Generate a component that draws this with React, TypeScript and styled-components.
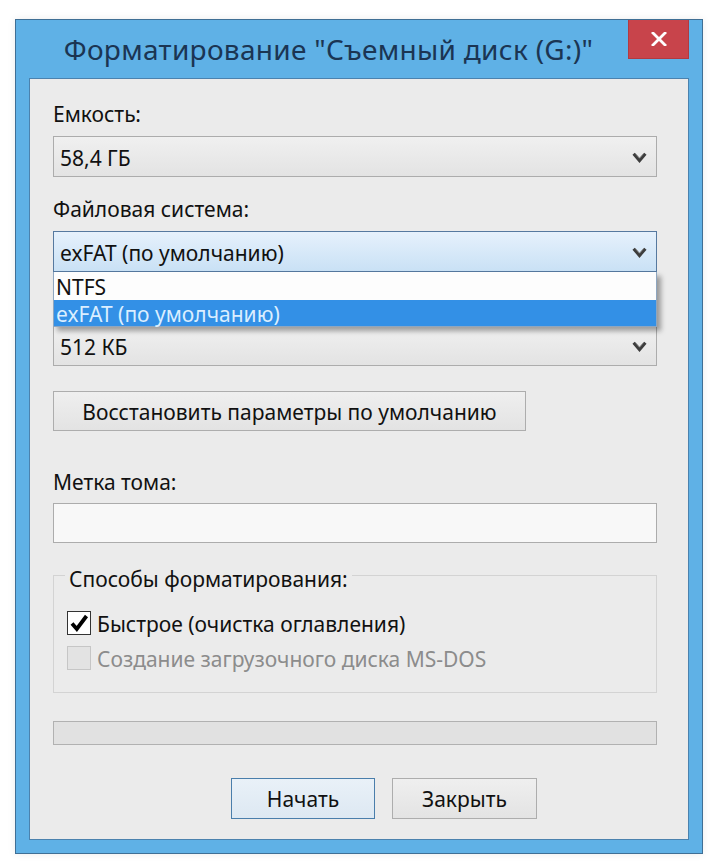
import React from "react";
import styled, { createGlobalStyle } from "styled-components";

const Global = createGlobalStyle`
  html, body { margin: 0; padding: 0; background: #ffffff; }
  body { font-family: "Segoe UI", "Noto Sans", "Open Sans", sans-serif; }
  * { box-sizing: border-box; }
`;

const FONT = `"Segoe UI", "Noto Sans", "Open Sans", sans-serif`;

const Page = styled.div`
  padding: 19px 0 0 15px;
  width: 724px;
  height: 868px;
`;

const Window = styled.div`
  width: 688px;
  border: 1px solid #3f6f95;
  background: #5fb1e6;
  padding: 0 13px 13px;
  display: flex;
  flex-direction: column;
  box-shadow: 0 0 8px rgba(0, 0, 0, 0.08);
`;

const TitleBar = styled.div`
  height: 58px;
  display: flex;
  align-items: flex-start;
`;

const Title = styled.div`
  flex: 1;
  text-align: center;
  font-family: ${FONT};
  font-size: 28px;
  letter-spacing: 0.3px;
  line-height: 58px;
  color: #1b3553;
  white-space: nowrap;
`;

const CloseButton = styled.div`
  width: 61px;
  height: 39px;
  background: #c8444b;
  border: 1px solid #b23a41;
  border-top: none;
  display: flex;
  align-items: center;
  justify-content: center;
`;

const Client = styled.div`
  background: #ebebeb;
  border: 1px solid #4b82ae;
  padding: 22px 31px 20px 23px;
  display: flex;
  flex-direction: column;
`;

const Label = styled.div<{ $mt?: number; $mb?: number }>`
  font-family: ${FONT};
  font-size: 21px;
  line-height: 26px;
  height: 26px;
  color: #111;
  margin-top: ${(p) => p.$mt ?? 0}px;
  margin-bottom: ${(p) => p.$mb ?? 9}px;
  white-space: nowrap;
`;

const ComboWrap = styled.div`
  position: relative;
`;

const Combo = styled.div<{ $focused?: boolean }>`
  height: 41px;
  border: 1px solid ${(p) => (p.$focused ? "#56799f" : "#acacac")};
  background: ${(p) =>
    p.$focused
      ? "linear-gradient(#e6f1fc, #c9e1f5)"
      : "linear-gradient(#f0f0f0, #e3e3e3)"};
  display: flex;
  align-items: center;
  padding: 2px 9px 0 6px;
  font-family: ${FONT};
  font-size: 21px;
  color: #111;
`;

const ComboText = styled.span`
  flex: 1;
  white-space: nowrap;
`;

const DropList = styled.div`
  position: absolute;
  top: 100%;
  left: 0;
  right: 0;
  z-index: 5;
  background: #fdfdfd;
  border: 1px solid #8ea6c0;
  border-top: none;
  box-shadow: 4px 4px 5px rgba(0, 0, 0, 0.35);
`;

const DropItem = styled.div<{ $selected?: boolean }>`
  height: ${(p) => (p.$selected ? 26 : 28)}px;
  line-height: ${(p) => (p.$selected ? 29 : 31)}px;
  padding-left: 2px;
  font-family: ${FONT};
  font-size: 21px;
  background: ${(p) => (p.$selected ? "#3390e6" : "transparent")};
  color: ${(p) => (p.$selected ? "#dbeeff" : "#111")};
  white-space: nowrap;
`;

const Gap = styled.div<{ $h: number }>`
  height: ${(p) => p.$h}px;
  flex: none;
`;

const Button = styled.div<{ $w: number; $default?: boolean }>`
  width: ${(p) => p.$w}px;
  height: ${(p) => (p.$default !== undefined ? 41 : 40)}px;
  border: 1px solid ${(p) => (p.$default ? "#4a7eab" : "#adadad")};
  background: ${(p) =>
    p.$default
      ? "linear-gradient(#e9f1f8, #dde8f2)"
      : "linear-gradient(#efefef, #e3e3e3)"};
  display: flex;
  align-items: center;
  justify-content: center;
  padding-top: 1px;
  font-family: ${FONT};
  font-size: 21px;
  color: #111;
  white-space: nowrap;
`;

const TextBox = styled.div`
  height: 40px;
  border: 1px solid #acacac;
  background: #f8f8f8;
`;

const Group = styled.fieldset`
  margin: 0;
  border: 1px solid #d3d3d3;
  padding: 13px 0 17px 13px;
  min-inline-size: 0;
`;

const Legend = styled.legend`
  margin-left: -2px;
  padding: 8px 4px 0;
  font-family: ${FONT};
  font-size: 21px;
  line-height: 26px;
  color: #111;
`;

const CheckRow = styled.div`
  height: 35px;
  display: flex;
  align-items: center;
  gap: 6px;
`;

const Box = styled.div<{ $disabled?: boolean }>`
  width: 24px;
  height: 24px;
  border: 1px solid ${(p) => (p.$disabled ? "#c6c6c6" : "#333")};
  background: ${(p) => (p.$disabled ? "#e3e3e3" : "#fff")};
  display: flex;
  align-items: center;
  justify-content: center;
`;

const CheckText = styled.span<{ $disabled?: boolean }>`
  font-family: ${FONT};
  font-size: 21px;
  line-height: 26px;
  padding-top: 2px;
  color: ${(p) => (p.$disabled ? "#8c8c8c" : "#111")};
  white-space: nowrap;
`;

const Progress = styled.div`
  height: 24px;
  border: 1px solid #b1b1b1;
  background: #e1e1e1;
`;

const ButtonRow = styled.div`
  display: flex;
  gap: 17px;
  padding-left: 178px;
`;

const Chevron = () => (
  <svg width="15" height="11" viewBox="0 0 15 11">
    <polyline
      points="1.6,1.8 7.5,8.6 13.4,1.8"
      fill="none"
      stroke="#3d3d3d"
      strokeWidth="3"
      strokeLinejoin="miter"
    />
    <polyline
      points="3.2,1.2 7.5,6.2 11.8,1.2"
      fill="none"
      stroke="#8a8a8a"
      strokeWidth="0.9"
    />
  </svg>
);

const CloseX = () => (
  <svg width="16" height="14" viewBox="0 0 16 14">
    <path d="M2 1 L14 13 M14 1 L2 13" stroke="#fff" strokeWidth="2.8" strokeLinecap="square" />
  </svg>
);

const Check = () => (
  <svg width="22" height="22" viewBox="0 0 22 22">
    <polyline
      points="4,11.5 8.8,17 18.5,4"
      fill="none"
      stroke="#000"
      strokeWidth="3.8"
      strokeLinejoin="miter"
    />
  </svg>
);

export default function App() {
  return (
    <>
      <Global />
      <Page>
        <Window>
          <TitleBar>
            <Title>Форматирование "Съемный диск (G:)"</Title>
            <CloseButton>
              <CloseX />
            </CloseButton>
          </TitleBar>
          <Client>
            <Label>Емкость:</Label>
            <Combo>
              <ComboText>58,4 ГБ</ComboText>
              <Chevron />
            </Combo>

            <Label $mt={19}>Файловая система:</Label>
            <ComboWrap>
              <Combo $focused>
                <ComboText>exFAT (по умолчанию)</ComboText>
                <Chevron />
              </Combo>
              <DropList>
                <DropItem>NTFS</DropItem>
                <DropItem $selected>exFAT (по умолчанию)</DropItem>
              </DropList>
            </ComboWrap>

            <Gap $h={53} />
            <Combo>
              <ComboText>512 КБ</ComboText>
              <Chevron />
            </Combo>

            <Gap $h={25} />
            <Button $w={473}>Восстановить параметры по умолчанию</Button>

            <Label $mt={38} $mb={8}>Метка тома:</Label>
            <TextBox />

            <Gap $h={15} />
            <Group>
              <Legend>Способы форматирования:</Legend>
              <CheckRow>
                <Box>
                  <Check />
                </Box>
                <CheckText>Быстрое (очистка оглавления)</CheckText>
              </CheckRow>
              <CheckRow>
                <Box $disabled />
                <CheckText $disabled>Создание загрузочного диска MS-DOS</CheckText>
              </CheckRow>
            </Group>

            <Gap $h={28} />
            <Progress />

            <Gap $h={33} />
            <ButtonRow>
              <Button $w={144} $default>
                Начать
              </Button>
              <Button $w={145} $default={false}>
                Закрыть
              </Button>
            </ButtonRow>
          </Client>
        </Window>
      </Page>
    </>
  );
}
